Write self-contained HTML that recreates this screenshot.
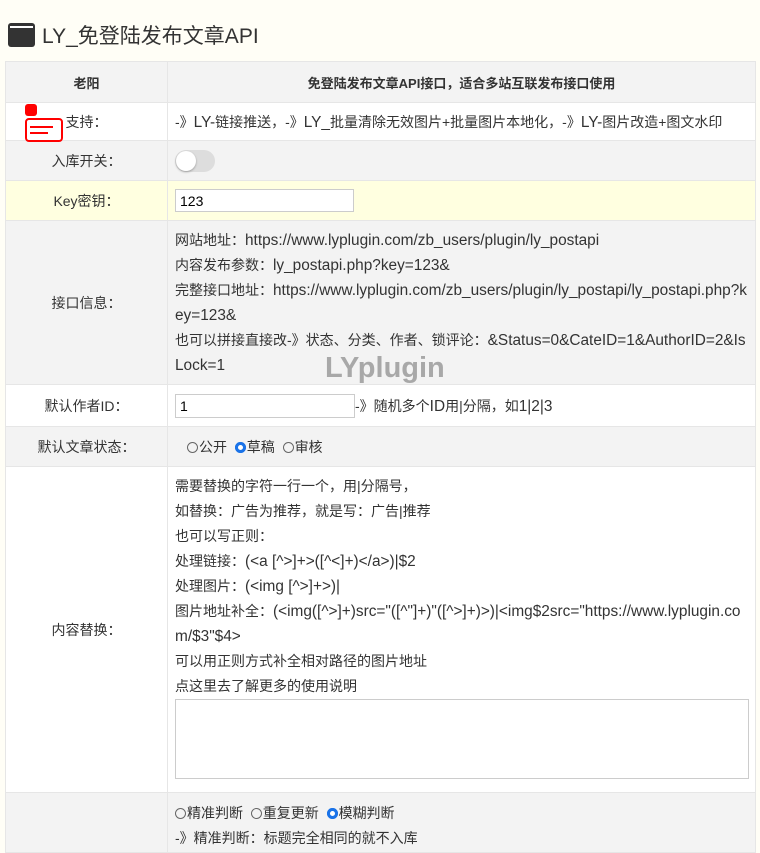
<!DOCTYPE html>
<html><head><meta charset="utf-8">
<style>
body{margin:0;background:#fffef6;font-family:"Liberation Sans","Noto Sans CJK SC",sans-serif;font-size:14px;color:#333;width:760px;height:841px;overflow:hidden;position:relative}
.title{position:absolute;left:8px;top:21px;height:28px;font-size:21px;color:#333;display:flex;align-items:center}
.ico{width:27px;height:24px;background:#333;border-radius:3px;margin-right:7px;position:relative}
.ico:before{content:"";position:absolute;left:2px;right:2px;top:3px;height:2px;background:#fff}
table{position:absolute;left:5px;top:61px;width:751px;border-collapse:collapse;background:#fff;table-layout:fixed}
td{border:1px solid #e6e6e6;padding:0 7px;vertical-align:middle;word-break:break-all;overflow:hidden}
td.l{width:161px;text-align:center;padding:0}
.g td{background:#f3f3f3}
.y td{background:#ffffe0}
input.t{height:23px;border:1px solid #ccc;box-sizing:border-box;padding:0 4px;font-size:14px;font-family:inherit;background:#fff}
.rad{display:inline-block;width:11px;height:11px;border:1px solid #666;border-radius:50%;vertical-align:-1px;box-sizing:border-box;margin-right:1px}
.rad.on{border:3px solid #1a73e8;background:#fff;outline:1px solid #1a73e8;outline-offset:-1px}
.sw{width:40px;height:22px;border-radius:11px;background:#ddd;position:relative}
.sw:after{content:"";position:absolute;left:1px;top:1px;width:20px;height:20px;border-radius:50%;background:#fff;box-shadow:0 1px 2px rgba(0,0,0,.3)}
.lh{line-height:25px;vertical-align:top}
.e{font-size:15.4px}
</style></head><body>
<div class="title"><div class="ico"></div>LY_免登陆发布文章API</div>
<table>
<tr class="g" style="height:41px;font-weight:bold;font-size:13px"><td class="l" style="color:#333">老阳</td><td style="text-align:center">免登陆发布文章API接口，适合多站互联发布接口使用</td></tr>
<tr style="height:38px"><td class="l" style="position:relative;overflow:visible">
<div style="position:absolute;left:19px;top:1px;width:12px;height:12px;background:#f00;border-radius:3px"></div>
<div style="position:absolute;left:19px;top:15px;width:38px;height:24px;border:2px solid #f00;border-radius:4px;box-sizing:border-box;background:#fff"><div style="position:absolute;left:3px;top:6px;width:23px;height:2px;background:#f00"></div><div style="position:absolute;left:3px;top:12px;width:18px;height:2px;background:#f00"></div></div><span style="position:relative">支持：</span></td><td>-》<span class="e">LY-</span>链接推送，-》<span class="e">LY_</span>批量清除无效图片+批量图片本地化，-》<span class="e">LY-</span>图片改造+图文水印</td></tr>
<tr class="g" style="height:40px"><td class="l">入库开关：</td><td><div class="sw"></div></td></tr>
<tr class="y" style="height:40px"><td class="l">Key密钥：</td><td><input class="t" style="width:179px" value="123"></td></tr>
<tr class="g" style="height:164px"><td class="l">接口信息：</td><td class="lh" style="position:relative;padding-top:7px">网站地址：<span class="e">https://www.lyplugin.com/zb_users/plugin/ly_postapi</span><br>内容发布参数：<span class="e">ly_postapi.php?key=123&amp;</span><br>完整接口地址：<span class="e">https://www.lyplugin.com/zb_users/plugin/ly_postapi/ly_postapi.php?key=123&amp;</span><br>也可以拼接直接改-》状态、分类、作者、锁评论：<span class="e">&amp;Status=0&amp;CateID=1&amp;AuthorID=2&amp;IsLock=1</span>
<div style="position:absolute;left:157px;top:133px;font-size:29px;font-weight:bold;color:#a8a8a8;line-height:1">LYplugin</div></td></tr>
<tr style="height:42px"><td class="l">默认作者ID：</td><td><input class="t" style="width:180px;height:24px" value="1">-》随机多个<span class="e">ID</span>用|分隔，如<span class="e">1|2|3</span></td></tr>
<tr class="g" style="height:40px"><td class="l">默认文章状态：</td><td style="padding-left:19px"><span class="rad"></span>公开 &nbsp;<span class="rad on"></span>草稿 &nbsp;<span class="rad"></span>审核</td></tr>
<tr style="height:326px"><td class="l" style="vertical-align:middle">内容替换：</td><td class="lh" style="padding-top:7px">需要替换的字符一行一个，用|分隔号，<br>如替换：广告为推荐，就是写：广告|推荐<br>也可以写正则：<br>处理链接：<span class="e">(&lt;a [^&gt;]+&gt;([^&lt;]+)&lt;/a&gt;)|$2</span><br>处理图片：<span class="e">(&lt;img [^&gt;]+&gt;)|</span><br>图片地址补全：<span class="e">(&lt;img([^&gt;]+)src="([^"]+)"([^&gt;]+)&gt;)|&lt;img$2src="https://www.lyplugin.com/$3"$4&gt;</span><br>可以用正则方式补全相对路径的图片地址<br>点这里去了解更多的使用说明<br><div style="width:574px;height:80px;border:1px solid #ccc;box-sizing:border-box;margin:0 0 12px;background:#fff"></div></td></tr>
<tr class="g" style="height:60px"><td class="l"></td><td class="lh" style="padding-top:8px"><span class="rad"></span>精准判断 &nbsp;<span class="rad"></span>重复更新 &nbsp;<span class="rad on"></span>模糊判断<br>-》精准判断：标题完全相同的就不入库</td></tr>
</table>
</body></html>
